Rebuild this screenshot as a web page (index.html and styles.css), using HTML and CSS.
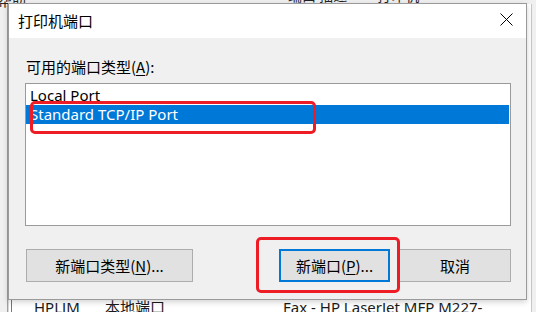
FILE: index.html
```html
<!DOCTYPE html>
<html lang="zh-CN">
<head>
<meta charset="utf-8">
<title>打印机端口</title>
<link rel="stylesheet" href="styles.css">
</head>
<body>
<div class="desk">
  <div class="bg-top">
    <span class="bg-top-a">帮助</span>
    <span class="bg-top-b">端口 描述</span>
    <span class="bg-top-c">打印机</span>
  </div>
  <div class="bg-panel">
    <div class="bg-table">
      <div class="bg-row">
        <span class="bg-c1">HPLJM</span>
        <span class="bg-c2">本地端口</span>
        <span class="bg-c3">Fax - HP LaserJet MFP M227-</span>
      </div>
    </div>
  </div>
</div>

<div class="dialog">
  <div class="titlebar">
    <span class="title">打印机端口</span>
    <span class="close" aria-label="关闭">
      <svg width="13" height="13" viewBox="0 0 13 13"><path d="M0.5 0.5 L12.5 12.5 M12.5 0.5 L0.5 12.5" stroke="#000" stroke-width="1" fill="none"/></svg>
    </span>
  </div>
  <div class="body">
    <div class="label">可用的端口类型(<u>A</u>):</div>
    <div class="listbox">
      <div class="item">Local Port</div>
      <div class="item selected">Standard TCP/IP Port</div>
    </div>
    <div class="buttons">
      <button class="btn btn-wide">新端口类型(<u>N</u>)...</button>
      <div class="btn-group">
        <button class="btn btn-default">新端口(<u>P</u>)...</button>
        <button class="btn">取消</button>
      </div>
    </div>
  </div>
</div>

<div class="mark mark-item"></div>
<div class="mark mark-btn"></div>
</body>
</html>
```

FILE: styles.css
```css
* { box-sizing: border-box; }
html, body {
  margin: 0;
  padding: 0;
}
body {
  width: 536px;
  height: 312px;
  overflow: hidden;
  position: relative;
  background: #f0f0f0;
  font-family: "Noto Sans", "Noto Sans CJK SC", sans-serif;
  font-size: 15px;
  color: #000;
}

/* backdrop window */
.desk {
  width: 536px;
  height: 312px;
  display: flex;
  flex-direction: column;
}
.bg-top {
  height: 4px;
  overflow: visible;
  display: flex;
  line-height: 20px;
  font-family: "Noto Sans CJK SC", sans-serif;
  font-size: 14px;
  color: #222;
}
.bg-top span {
  margin-top: -15px;
  white-space: nowrap;
}
.bg-top .bg-top-a { margin-left: -2px; margin-top: -10px; }
.bg-top-b { margin-left: 262px; }
.bg-top-c { margin-left: 30px; }
.bg-panel {
  flex: 1;
  display: flex;
  padding-left: 7px;
  padding-right: 4px;
}
.bg-table {
  flex: 1;
  border-left: 1px solid #a0a0a0;
  border-right: 1px solid #c8c8c8;
  background: #fff;
  display: flex;
  flex-direction: column;
  justify-content: flex-end;
  padding-left: 3px;
  box-shadow: inset 1px 0 0 #d8d8d8;
}
.bg-row {
  height: 13px;
  display: flex;
  align-items: flex-start;
  line-height: 20px;
  white-space: nowrap;
  color: #1a1a1a;
}
.bg-row span { margin-top: -2px; }
.bg-c1 { width: 94px; padding-left: 22px; border-left: 1px solid #777; height: 20px; }
.bg-c2 { width: 178px; }

/* dialog */
.dialog {
  position: absolute;
  left: 8px;
  top: 3px;
  width: 519px;
  height: 297px;
  border: 1px solid #9a9a9a;
  background: #f0f0f0;
  box-shadow: 0 2px 6px rgba(0,0,0,0.18);
  display: flex;
  flex-direction: column;
}
.titlebar {
  height: 34px;
  background: #fff;
  display: flex;
  align-items: center;
  justify-content: space-between;
  padding-left: 9px;
  padding-right: 13px;
}
.title {
  font-family: "Noto Sans CJK SC", sans-serif;
  font-size: 15px;
  line-height: 20px;
  margin-top: -1px;
}
.close {
  width: 13px;
  height: 13px;
  display: block;
  margin-top: -3px;
}
.close svg { display: block; }

.body {
  flex: 1;
  padding: 0 15px 0 16px;
  display: flex;
  flex-direction: column;
}
.label {
  font-family: "Noto Sans CJK SC", sans-serif;
  font-size: 15px;
  line-height: 20px;
  margin-top: 19px;
  padding-left: 1px;
}
.label u, .btn u { text-underline-offset: 2px; }
.listbox {
  margin-top: 6px;
  height: 143px;
  background: #fff;
  border: 1px solid #9a9a9a;
  padding: 2px 1px 0 0;
}
.item {
  height: 19px;
  line-height: 19px;
  padding-left: 4px;
  font-size: 15px;
  white-space: nowrap;
}
.item.selected {
  background: #0078d7;
  color: #fff;
}
.buttons {
  margin-top: 23px;
  display: flex;
  justify-content: space-between;
  padding-left: 1px;
}
.btn-group {
  display: flex;
  gap: 9px;
}
.btn {
  height: 33px;
  width: 112px;
  background: #e1e1e1;
  border: 1px solid #adadad;
  border-radius: 0;
  font-family: "Noto Sans CJK SC", sans-serif;
  font-size: 15px;
  color: #000;
  padding: 0;
  line-height: 20px;
}
.btn-wide { width: 167px; }
.btn-default {
  width: 111px;
  border: 2px solid #0078d7;
}

/* red annotation boxes */
.mark {
  position: absolute;
  border: 3px solid #ee1c24;
  border-radius: 5px;
}
.mark-item {
  left: 30px;
  top: 101px;
  width: 286px;
  height: 33px;
}
.mark-btn {
  left: 256px;
  top: 237px;
  width: 144px;
  height: 56px;
}
```
